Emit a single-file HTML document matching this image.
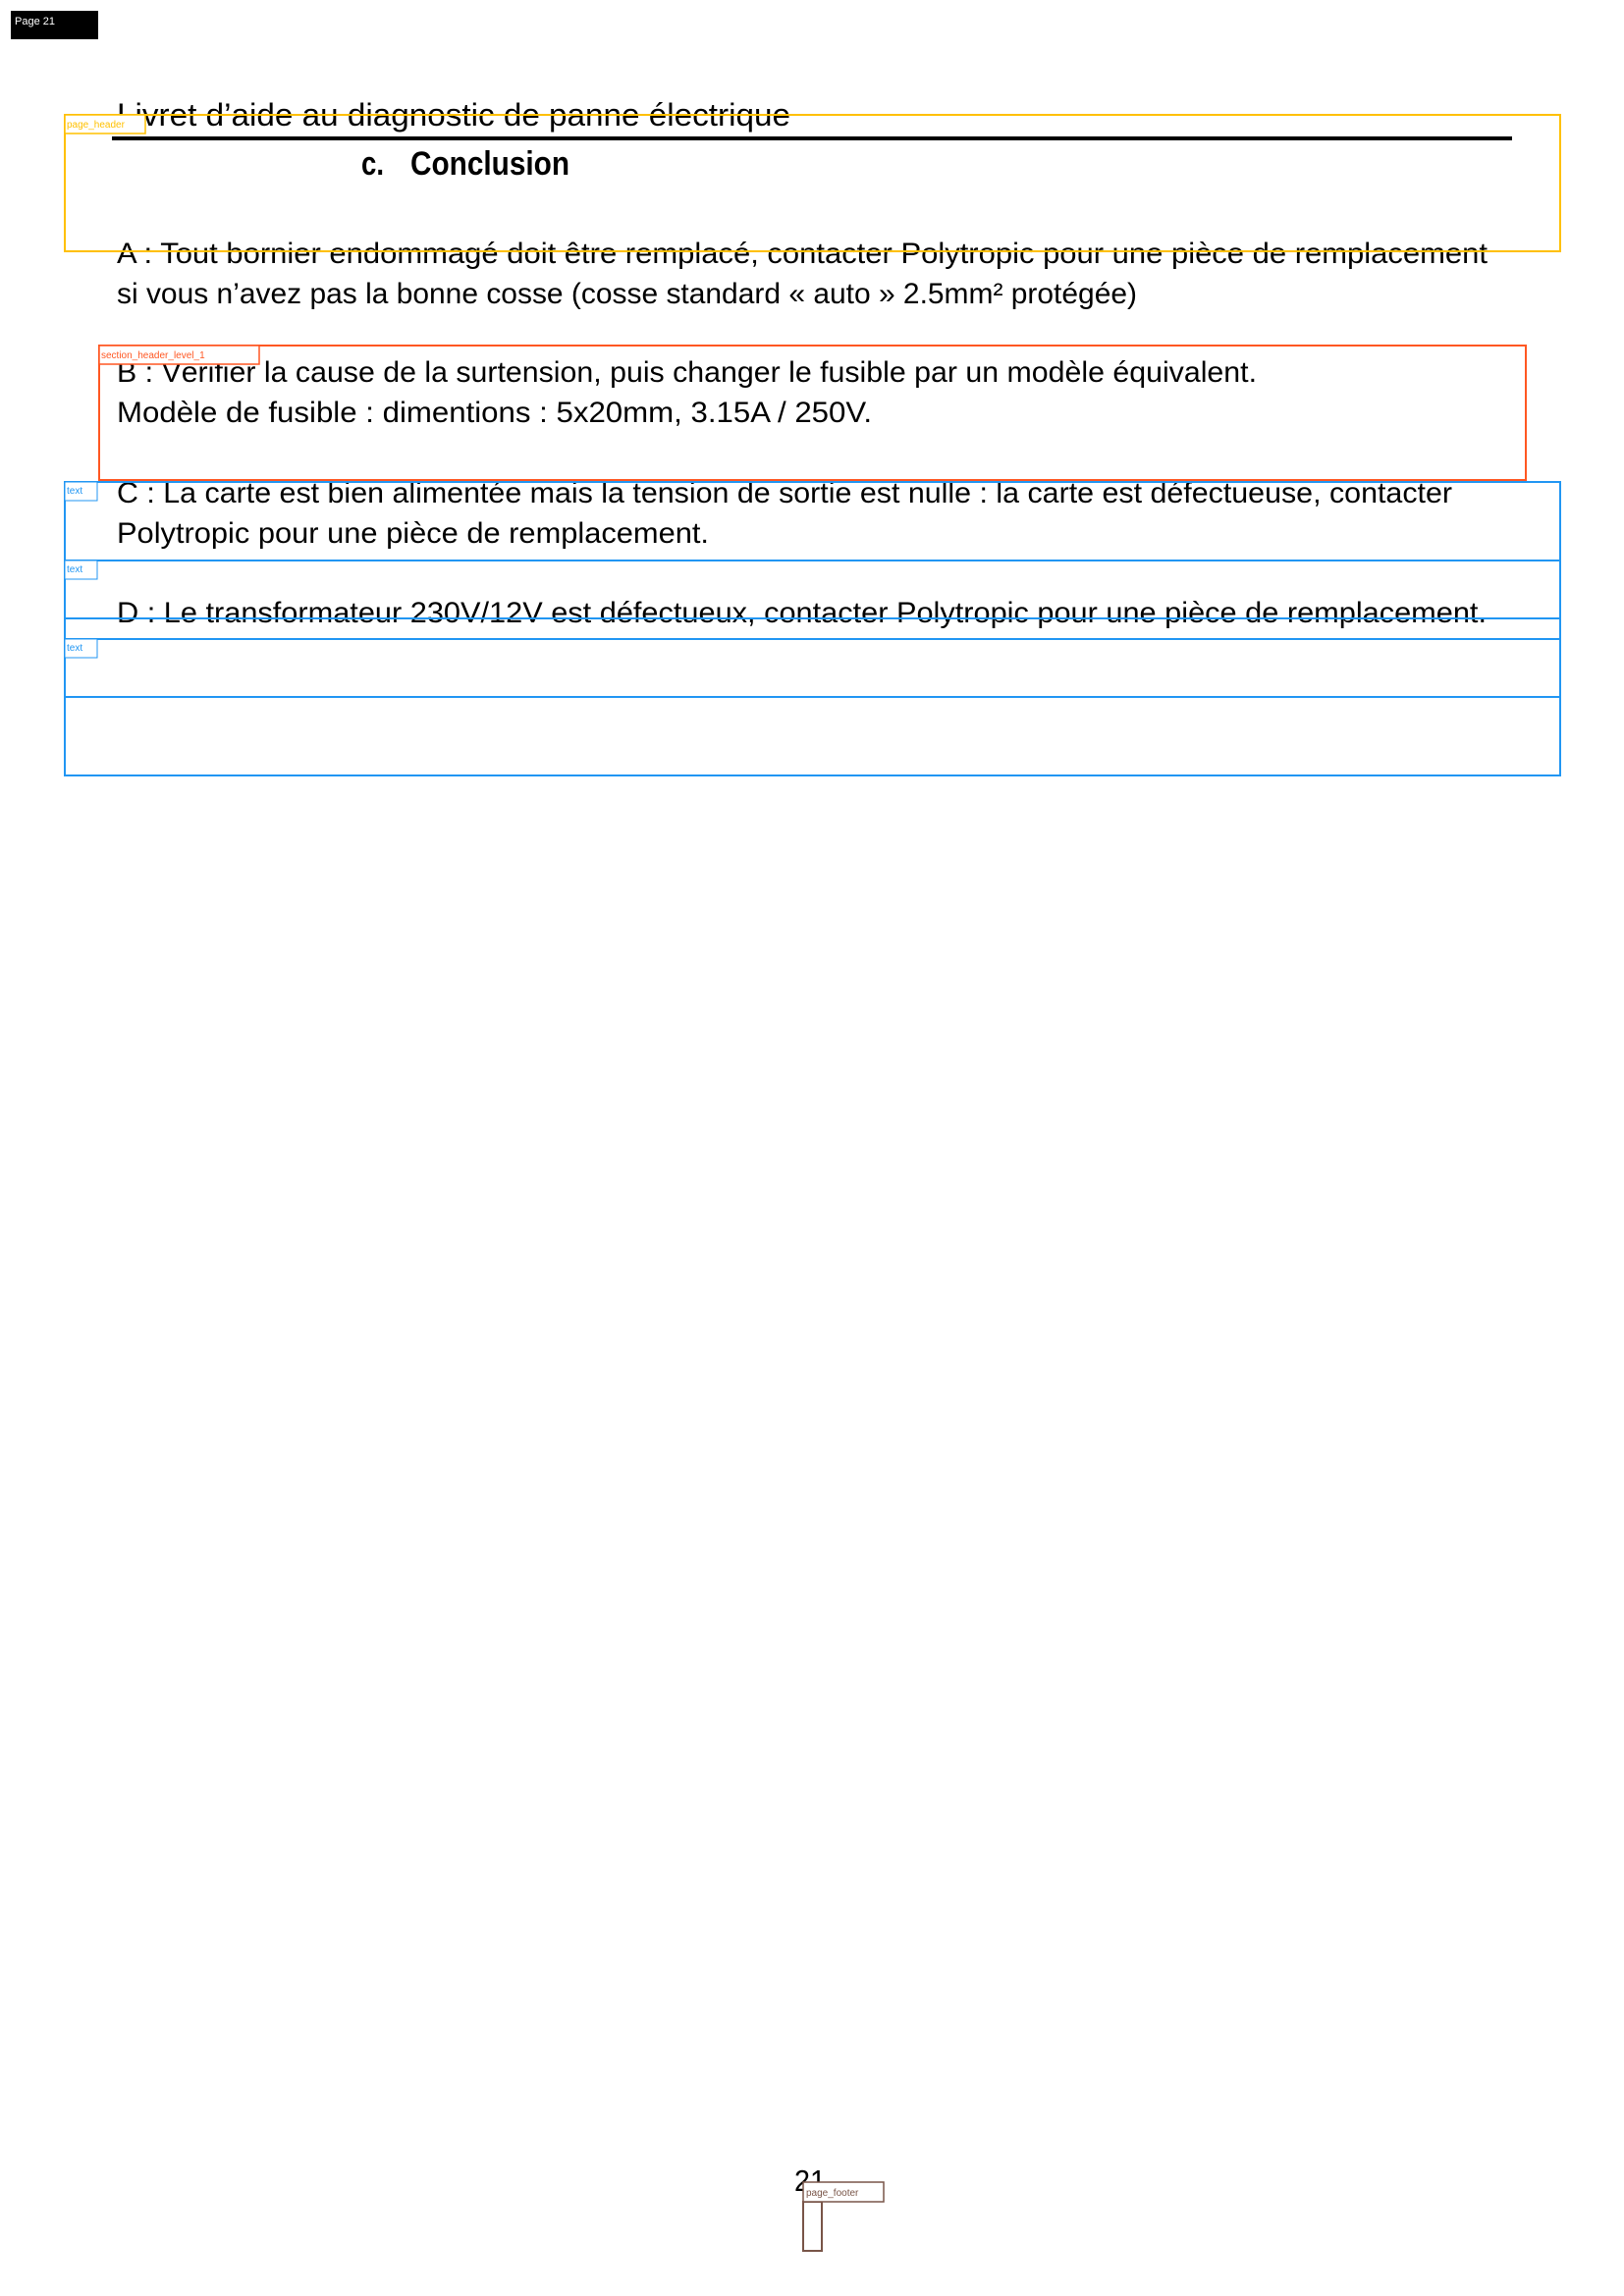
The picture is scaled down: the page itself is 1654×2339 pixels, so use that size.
<!DOCTYPE html>
<html><head><meta charset="utf-8"><style>
html,body{margin:0;padding:0;background:#fff;}
svg{display:block}
</style></head><body>
<svg width="1654" height="2339" viewBox="0 0 1654 2339" xmlns="http://www.w3.org/2000/svg">
<rect width="1654" height="2339" fill="#fff"/>
<!-- page tag -->
<rect x="11" y="11" width="89" height="29" fill="#000"/>
<text x="15" y="25" font-family="Liberation Sans, sans-serif" font-size="11" fill="#fff">Page 21</text>

<!-- header -->
<text x="119" y="128" font-family="Liberation Sans, sans-serif" font-size="32" textLength="686" lengthAdjust="spacingAndGlyphs" fill="#000">Livret d’aide au diagnostic de panne électrique</text>
<rect x="114" y="139" width="1426" height="4" fill="#000"/>

<g font-family="Liberation Sans, sans-serif" fill="#000">
<text x="368" y="178" font-size="34" font-weight="bold" textLength="23" lengthAdjust="spacingAndGlyphs">c.</text>
<text x="418" y="178" font-size="34" font-weight="bold" textLength="162" lengthAdjust="spacingAndGlyphs">Conclusion</text>

<text x="119" y="268" font-size="30" textLength="1396" lengthAdjust="spacingAndGlyphs">A : Tout bornier endommagé doit être remplacé, contacter Polytropic pour une pièce de remplacement</text>
<text x="119" y="309" font-size="30" textLength="1039" lengthAdjust="spacingAndGlyphs">si vous n’avez pas la bonne cosse (cosse standard « auto » 2.5mm² protégée)</text>

<text x="119" y="389" font-size="30" textLength="1161" lengthAdjust="spacingAndGlyphs">B : Vérifier la cause de la surtension, puis changer le fusible par un modèle équivalent.</text>
<text x="119" y="430" font-size="30" textLength="769" lengthAdjust="spacingAndGlyphs">Modèle de fusible : dimentions : 5x20mm,  3.15A / 250V.</text>

<text x="119" y="512" font-size="30" textLength="1360" lengthAdjust="spacingAndGlyphs">C : La carte est bien alimentée mais la tension de sortie est nulle : la carte est défectueuse, contacter</text>
<text x="119" y="553" font-size="30" textLength="603" lengthAdjust="spacingAndGlyphs">Polytropic pour une pièce de remplacement.</text>

<text x="119" y="634" font-size="30" textLength="1395" lengthAdjust="spacingAndGlyphs">D : Le transformateur 230V/12V est défectueux, contacter Polytropic pour une pièce de remplacement.</text>

<text x="809" y="2232" font-size="31" textLength="32" lengthAdjust="spacingAndGlyphs">21</text>
</g>

<!-- yellow page_header -->
<rect x="66" y="117" width="1523" height="139" fill="none" stroke="#ffc000" stroke-width="2"/>
<rect x="66" y="117" width="82" height="19" fill="#fff" stroke="#ffc000" stroke-width="1.5"/>
<text x="68" y="130" font-family="Liberation Sans, sans-serif" font-size="10" fill="#ffc000">page_header</text>

<!-- red section header -->
<rect x="101" y="352" width="1453" height="137" fill="none" stroke="#ff5722" stroke-width="2"/>
<rect x="101" y="352" width="163" height="19" fill="#fff" stroke="#ff5722" stroke-width="1.5"/>
<text x="103" y="365" font-family="Liberation Sans, sans-serif" font-size="10" fill="#ff5722">section_header_level_1</text>

<!-- blue text boxes -->
<g fill="none" stroke="#2196f3" stroke-width="2">
<rect x="66" y="491" width="1523" height="80"/>
<rect x="66" y="571" width="1523" height="59"/>
<rect x="66" y="651" width="1523" height="59"/>
<rect x="66" y="710" width="1523" height="80"/>
<line x1="66" y1="630" x2="66" y2="651"/>
<line x1="1589" y1="630" x2="1589" y2="651"/>
</g>
<g font-family="Liberation Sans, sans-serif" font-size="10" fill="#2196f3">
<rect x="66" y="491" width="33" height="19" fill="#fff" stroke="#2196f3" stroke-width="1"/>
<text x="68" y="503">text</text>
<rect x="66" y="571" width="33" height="19" fill="#fff" stroke="#2196f3" stroke-width="1"/>
<text x="68" y="583">text</text>
<rect x="66" y="651" width="33" height="19" fill="#fff" stroke="#2196f3" stroke-width="1"/>
<text x="68" y="663">text</text>
</g>

<!-- footer -->
<rect x="818" y="2243" width="19" height="50" fill="none" stroke="#795548" stroke-width="2"/>
<rect x="818" y="2223" width="82" height="20" fill="#fff" stroke="#795548" stroke-width="1.5"/>
<text x="821" y="2237" font-family="Liberation Sans, sans-serif" font-size="10" fill="#795548">page_footer</text>
</svg>
</body></html>
